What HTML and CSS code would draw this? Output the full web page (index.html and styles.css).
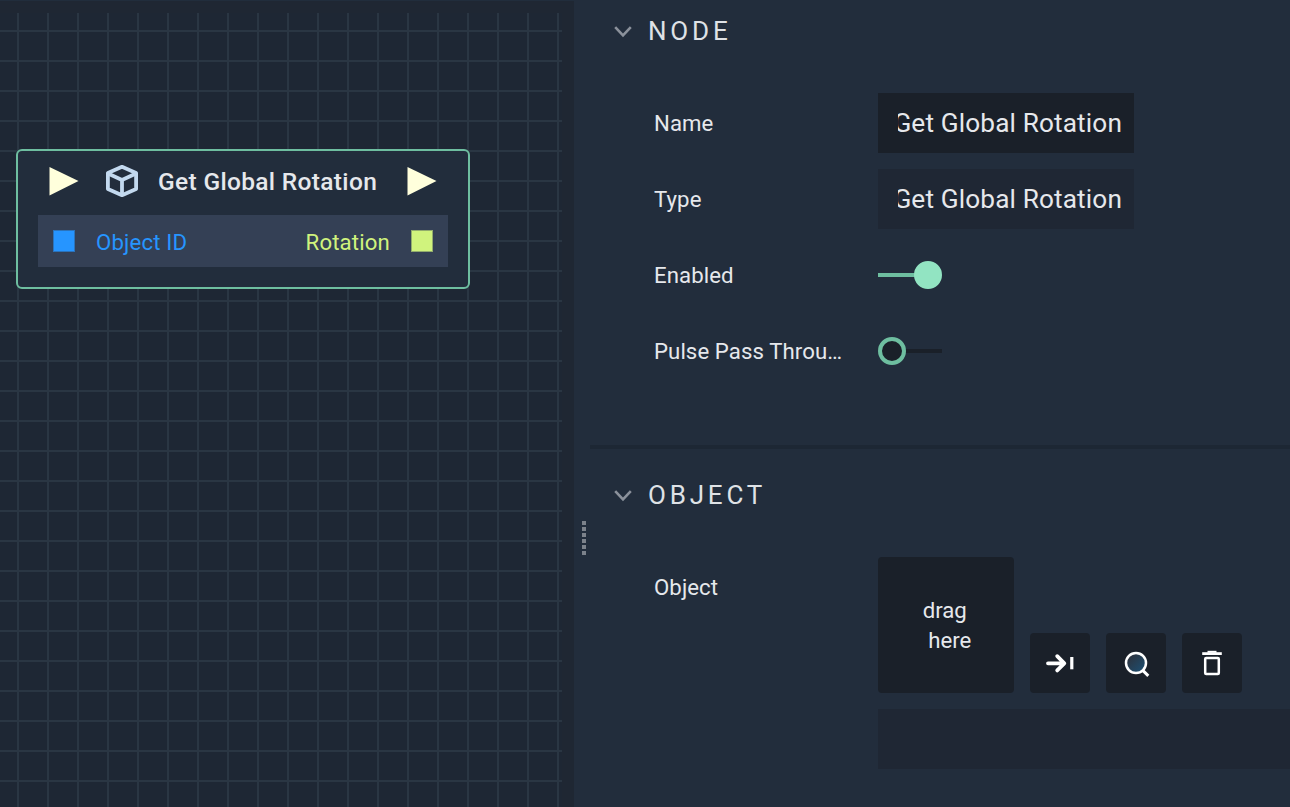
FILE: index.html
```html
<!DOCTYPE html>
<html lang="en">
<head>
<meta charset="utf-8">
<title>Node editor</title>
<link rel="stylesheet" href="styles.css">
</head>
<body>
<div class="editor">
  <main class="graph">
    <div class="grid"></div>
    <section class="node">
      <header class="node-head">
        <svg class="pulse" width="30" height="30" viewBox="0 0 30 30"><path d="M.5 1 29.5 15 .5 29.5z" fill="#ffffdc"/></svg>
        <svg class="cube" width="34" height="34" viewBox="0 0 34 34" fill="none" stroke="#c3d9ef" stroke-width="3.8" stroke-linejoin="round"><path d="M17 2.8 31.1 9V25L17 31.2 2.9 25V9z"/><path d="M3 9.5 17 16 31 9.5M17 16V30"/></svg>
        <h1 class="node-title">Get Global Rotation</h1>
        <svg class="pulse" width="30" height="30" viewBox="0 0 30 30"><path d="M.5 1 29.5 15 .5 29.5z" fill="#ffffdc"/></svg>
      </header>
      <div class="ports">
        <span class="port port-in"><i class="socket"></i>Object ID</span>
        <span class="port port-out">Rotation<i class="socket"></i></span>
      </div>
    </section>
  </main>
  <div class="splitter"><span class="grip"><i></i><i></i><i></i><i></i><i></i><i></i></span></div>
  <aside class="panel">
    <section class="group group-node">
      <h2 class="group-title"><svg width="18" height="12" viewBox="0 0 18 12" fill="none" stroke="#8b919b" stroke-width="2.6"><path d="M1.2 1.2 9 9.4 16.8 1.2"/></svg>NODE</h2>
      <div class="row"><label class="label">Name</label><div class="field"><span class="value">Get Global Rotation</span></div></div>
      <div class="row"><label class="label">Type</label><div class="field field-readonly"><span class="value">Get Global Rotation</span></div></div>
      <div class="row"><label class="label">Enabled</label><span class="toggle toggle-on"></span></div>
      <div class="row"><label class="label">Pulse Pass Through</label><span class="toggle"></span></div>
    </section>
    <section class="group group-object">
      <h2 class="group-title"><svg width="18" height="12" viewBox="0 0 18 12" fill="none" stroke="#8b919b" stroke-width="2.6"><path d="M1.2 1.2 9 9.4 16.8 1.2"/></svg>OBJECT</h2>
      <div class="row row-object">
        <label class="label">Object</label>
        <div class="object">
          <div class="object-tools">
            <div class="drop">drag<br>&nbsp;here</div>
            <button class="tool" aria-label="Select"><svg width="60" height="60" viewBox="0 0 60 60" fill="none" stroke="#fff" stroke-width="3.8" stroke-linecap="round" stroke-linejoin="round"><path d="M18 30.3H34M27.2 23.2 34.3 30.3 27.2 37.4"/><path d="M41.8 24V36.3" stroke-width="3.2" stroke-linecap="butt"/></svg></button>
            <button class="tool" aria-label="Find"><svg width="60" height="60" viewBox="0 0 60 60" fill="none" stroke="#fff" stroke-width="2.5"><defs><linearGradient id="lens" x1="0" y1="0" x2="1" y2="1"><stop offset=".2" stop-color="#2b3542"/><stop offset="1" stop-color="#1b5278"/></linearGradient></defs><circle cx="30" cy="30" r="10" fill="url(#lens)"/><path d="M36.5 37.2 42.3 42.8" stroke-width="3"/></svg></button>
            <button class="tool" aria-label="Delete"><svg width="60" height="60" viewBox="0 0 60 60" fill="none" stroke="#fff" stroke-width="2.5"><path d="M20.2 20.6H39.8" stroke-width="2.8"/><path d="M25.5 18.8H34.5" stroke-width="2"/><rect x="23.2" y="25" width="13.6" height="16" rx="1"/></svg></button>
          </div>
          <div class="object-field"></div>
        </div>
      </div>
    </section>
  </aside>
</div>
</body>
</html>
```

FILE: styles.css
```css
*, *::after { box-sizing: border-box; }
body { margin: 0; font-family: Roboto, sans-serif; color: #e6e8ec; background: #222d3c; }
.editor { display: grid; grid-template-columns: 574px 16px 1fr; width: 1290px; height: 807px; overflow: hidden; }

.graph { position: relative; padding: 148px 0 0 16px; background: #1f2733; border-top: 1px solid #212d3c; }
.grid {
  position: absolute; left: 0; top: 12px; width: 562px; bottom: 0;
  background:
    linear-gradient(90deg, #2a3643 2px, transparent 2px) 17px 0 / 30px 100%,
    linear-gradient(#2a3643 2px, transparent 2px) 0 17px / 100% 30px,
    #1e2734;
}
.node { position: relative; width: 454px; height: 140px; padding: 0 20px; border: 2px solid #6ebea0; border-radius: 6px; background: #222d3c; }
.node-head { display: flex; align-items: center; height: 64px; padding: 0 0 4px 11px; }
.pulse { flex: none; }
.pulse:last-child { margin-left: 29px; }
.cube { margin: 0 19px 0 26px; flex: none; }
.node-title { margin: 0; width: 220px; padding-top: 2px; font-size: 24.5px; font-weight: 500; letter-spacing: .33px; white-space: nowrap; line-height: 30px; }
.ports { display: flex; justify-content: space-between; align-items: center; height: 52px; padding: 2px 15px 0; background: #344055; }
.port { display: flex; align-items: center; gap: 21px; font-size: 22.2px; letter-spacing: .15px; }
.port-in { color: #2695ff; }
.port-out { color: #d0f37d; }
.socket { width: 22px; height: 22px; background: currentColor; border: 1px solid rgba(52, 64, 85, .4); margin-top: -2px; }

.splitter { display: flex; justify-content: center; padding: 521px 0 0 4px; background: #222d3c; }
.grip { display: grid; grid-auto-rows: 4px; gap: 2px; align-content: start; }
.grip i { width: 4px; background: #7c828b; }

.panel { background: #222d3c; overflow: hidden; }
.group { padding-left: 64px; }
.group-node { height: 449px; border-bottom: 4px solid #1d2734; }
.group-title { display: flex; align-items: center; gap: 16px; height: 62px; margin: 0 0 23px -40px; font-size: 26px; font-weight: 400; letter-spacing: 3.8px; color: #dfe2e6; }
.group-title svg { position: relative; top: 1px; }
.row { display: grid; grid-template-columns: 196px 1fr; column-gap: 28px; align-items: center; height: 76px; }
.label { font-size: 22.2px; letter-spacing: .08px; overflow: hidden; text-overflow: ellipsis; white-space: nowrap; }
.field { display: flex; width: 256px; height: 60px; padding: 0 12px 0 20px; align-items: center; background: #1a2029; }
.field-readonly { background: #1f2734; }
.value { display: flex; justify-content: flex-end; flex: 1; overflow: hidden; font-size: 26.2px; letter-spacing: .14px; line-height: 36px; white-space: nowrap; }
.toggle { position: relative; width: 64px; height: 28px; background: linear-gradient(#1a2029, #1a2029) 0 12px / 64px 4px no-repeat; }
.toggle::after { content: ""; position: absolute; left: 0; top: 0; width: 28px; height: 28px; border: 4px solid #6ebea0; border-radius: 50%; background: #1a2029; }
.toggle-on { background-image: linear-gradient(#6ebea0, #6ebea0); background-size: 50px 4px; }
.toggle-on::after { left: 36px; border-color: #92e4c2; background: #92e4c2; }

.group-object { padding-top: 15px; }
.row-object { height: auto; align-items: start; padding-top: 8px; }
.row-object .label { line-height: 60px; }
.object-tools { display: flex; align-items: flex-end; gap: 16px; }
.drop { display: grid; place-content: center; width: 136px; height: 136px; padding: 0 0 0 2px; border-radius: 4px; background: #1a2029; font-size: 22.2px; letter-spacing: 0; line-height: 30px; }
.tool { width: 60px; height: 60px; padding: 0; border: 0; border-radius: 4px; background: #1a2029; }
.tool svg { display: block; }
.object-field { height: 60px; margin-top: 16px; background: #1f2734; }
```
